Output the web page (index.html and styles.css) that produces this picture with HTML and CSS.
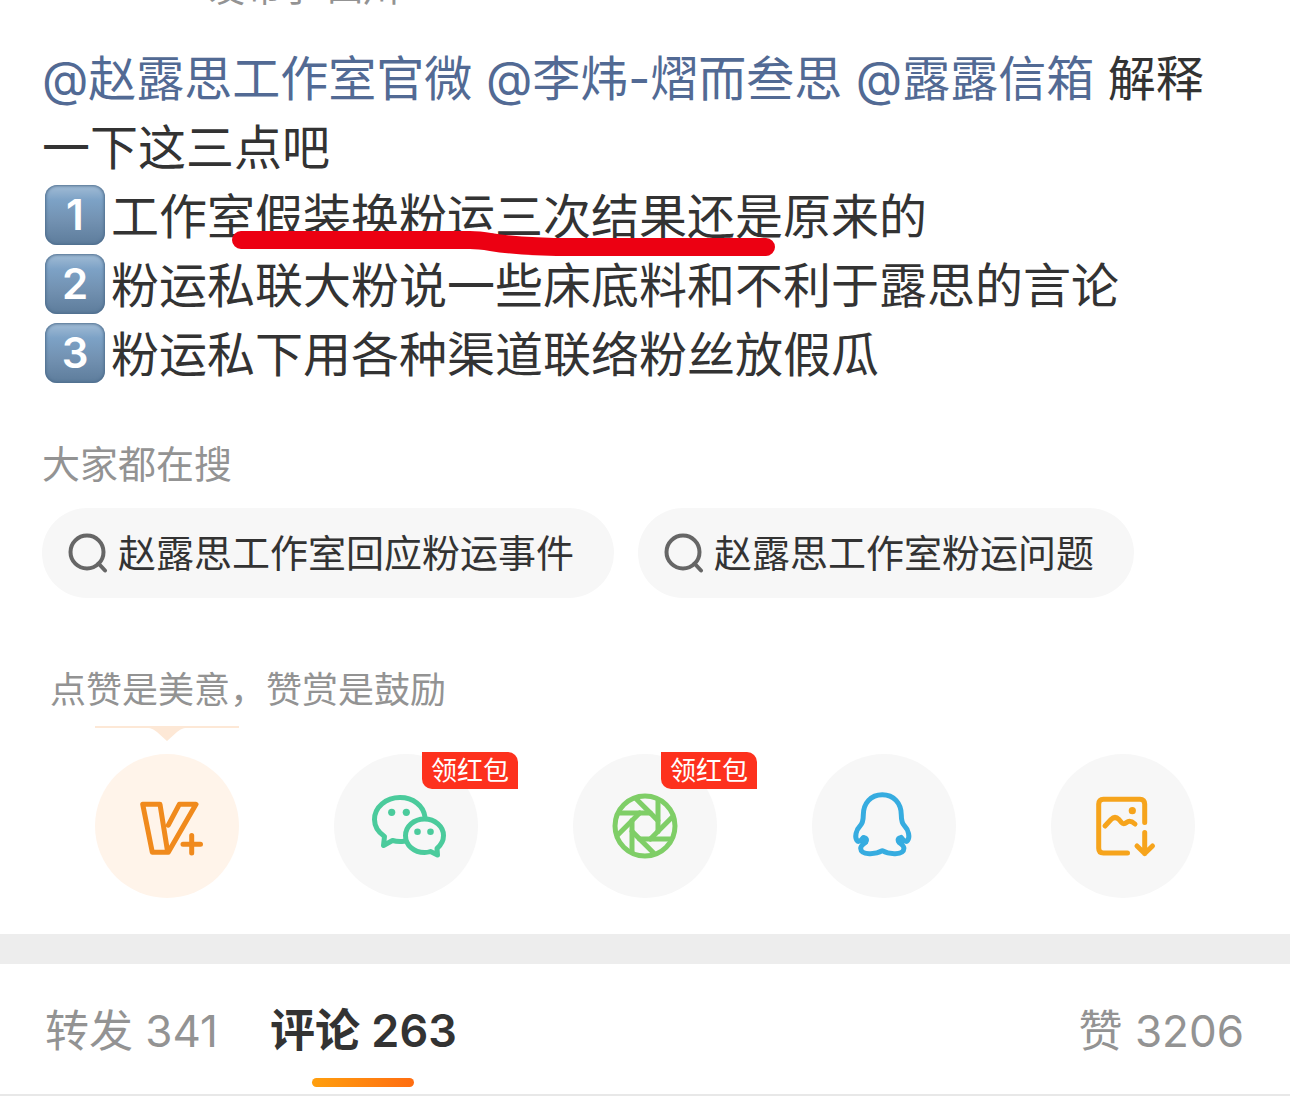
FILE: index.html
```html
<!DOCTYPE html>
<html lang="zh-CN">

<head>
    <meta charset="UTF-8">
    <meta name="viewport" content="width=device-width, initial-scale=1.0">
    <title>微博正文</title>
    <link rel="stylesheet" href="styles.css">
</head>

<body>
    <header class="post-header">
        <span class="post-meta">发布于 四川</span>
    </header>

    <!-- 正文 -->
    <article class="post">
        <p class="post-text"><a href="#">@赵露思工作室官微</a> <a href="#">@李炜-熠而叁思</a> <a href="#">@露露信箱</a> 解释一下这三点吧</p>
        <ol class="points">
            <li>
                <span class="keycap">1</span>工作室假装换粉运三次结果还是原来的
                <svg class="marker" width="544" height="28" viewBox="0 0 544 28" aria-hidden="true">
                    <path d="M9 10H238C262 10 262 17 340 17H534" />
                </svg>
            </li>
            <li><span class="keycap">2</span>粉运私联大粉说一些床底料和不利于露思的言论</li>
            <li><span class="keycap">3</span>粉运私下用各种渠道联络粉丝放假瓜</li>
        </ol>
    </article>

    <!-- 大家都在搜 -->
    <section class="search">
        <h2>大家都在搜</h2>
        <div class="chips">
            <a class="chip" href="#">
                <svg width="40" height="40" viewBox="0 0 40 40" aria-hidden="true">
                    <circle cx="19" cy="19" r="16.5" />
                    <path d="M30.5 30.5l6.5 7" />
                </svg>
                <span>赵露思工作室回应粉运事件</span>
            </a>
            <a class="chip" href="#">
                <svg width="40" height="40" viewBox="0 0 40 40" aria-hidden="true">
                    <circle cx="19" cy="19" r="16.5" />
                    <path d="M30.5 30.5l6.5 7" />
                </svg>
                <span>赵露思工作室粉运问题</span>
            </a>
        </div>
    </section>

    <!-- 赞赏和分享 -->
    <section class="share">
        <p class="share-tip">点赞是美意，赞赏是鼓励</p>
        <div class="share-list">
            <div class="share-item">
                <svg class="pointer" width="144" height="15" viewBox="0 0 144 15" aria-hidden="true">
                    <path d="M0 0H144V2H92C87 2 85 4 82 6L72 15L62 6C59 4 57 2 52 2H0Z" />
                </svg>
                <button class="share-btn vplus" type="button" aria-label="V+">
                    <svg width="80" height="80" viewBox="-4 -4 80 80">
                        <path d="M36.5 61L29 14.3H11.7L21.3 62.3H37.3L65 14.3H48.3L37.3 35.2" />
                        <path d="M60.7 45.5V63M52 54.3H69.5" />
                    </svg>
                </button>
            </div>
            <div class="share-item">
                <button class="share-btn wechat" type="button" aria-label="微信">
                    <svg width="80" height="80" viewBox="-4 -4 80 80">
                        <path d="M34 51.3C30 51.7 26 51.5 22.5 50.5L13.5 55.5L14.5 46.5C8 42 4.5 36 4.5 29.5C4.5 17 16 7.5 30 7.5C43 7.5 53.5 15.5 55 27" />
                        <path d="M54.5 29C65 29 73.5 36.5 73.5 45.5C73.5 50.5 71 55 67 58.5L67.5 65L60.5 61.5C58.5 62.2 56.5 62.5 54.5 62.5C43.8 62.5 35.5 55 35.5 45.7C35.5 36.5 43.8 29 54.5 29Z" />
                        <g class="fill">
                            <circle cx="21.7" cy="22.3" r="3.6" />
                            <circle cx="36.3" cy="22.3" r="3.6" />
                            <circle cx="47.5" cy="41.7" r="3.3" />
                            <circle cx="60.5" cy="41.7" r="3.3" />
                        </g>
                    </svg>
                </button>
                <span class="badge">领红包</span>
            </div>
            <div class="share-item">
                <button class="share-btn moments" type="button" aria-label="朋友圈">
                    <svg width="80" height="80" viewBox="-40 -40 80 80">
                        <circle r="30" />
                        <path d="M-26 -13H5.4" />
                        <path d="M-26 -13H5.4" transform="rotate(45)" />
                        <path d="M-26 -13H5.4" transform="rotate(90)" />
                        <path d="M-26 -13H5.4" transform="rotate(135)" />
                        <path d="M-26 -13H5.4" transform="rotate(180)" />
                        <path d="M-26 -13H5.4" transform="rotate(225)" />
                        <path d="M-26 -13H5.4" transform="rotate(270)" />
                        <path d="M-26 -13H5.4" transform="rotate(315)" />
                    </svg>
                </button>
                <span class="badge">领红包</span>
            </div>
            <div class="share-item">
                <button class="share-btn qq" type="button" aria-label="QQ">
                    <svg width="80" height="80" viewBox="-4 -4 80 80">
                        <path d="M34.3 60.7C28 64.5 13 65.5 12.7 58.5C12.6 56 14.5 54.5 17.5 52.5C16 51 15.5 49 15.5 47.5C13.5 50.5 10.5 52.5 9 50.5C6.5 47 8 40 12 36C15 33 15.3 30 15.3 25C15.3 13 23 4.7 34.3 4.7C45.6 4.7 53.3 13 53.3 25C53.3 30 53.6 33 56.6 36C60.6 40 62.1 47 59.6 50.5C58.1 52.5 55.1 50.5 53.1 47.5C53.1 49 52.6 51 51.1 52.5C54.1 54.5 56 56 55.9 58.5C55.6 65.5 40.6 64.5 34.3 60.7Z" />
                        <g class="fill">
                            <circle cx="16.5" cy="50" r="4.5" />
                            <circle cx="52.1" cy="50" r="4.5" />
                        </g>
                    </svg>
                </button>
            </div>
            <div class="share-item">
                <button class="share-btn save" type="button" aria-label="保存图片">
                    <svg width="80" height="80" viewBox="-4 -4 80 80">
                        <path d="M57.7 32.5V14Q57.7 9.3 53 9.3H16.4Q11.7 9.3 11.7 14V58.3Q11.7 63 16.4 63H40.5" />
                        <path d="M18 36L24 29.5Q28 25.5 32 29.5L34.5 32.5Q36.5 35 39.5 32.5Q43 29.5 48 34" />
                        <path d="M57.7 42.5V63.5M50 56L57.7 63.5L65.5 56" />
                        <circle class="fill" cx="45.3" cy="20.7" r="3.6" />
                    </svg>
                </button>
            </div>
        </div>
    </section>

    <!-- 转发 / 评论 / 赞 -->
    <nav class="tabs">
        <button class="tab" type="button">转发 341</button>
        <button class="tab active" type="button">评论 263</button>
        <button class="tab like" type="button">赞 3206</button>
    </nav>
</body>

</html>
```

FILE: styles.css
```css
* {
    box-sizing: border-box;
}

body {
    margin: 0;
    background-color: #fff;
    color: #333;
    font-family: Inter, "Noto Sans CJK SC", sans-serif;
}

a {
    color: #526a94;
    text-decoration: none;
}

button {
    padding: 0;
    border: none;
    background: none;
    font-family: inherit;
    cursor: pointer;
}

h2,
p,
ol {
    margin: 0;
    padding: 0;
}

.post-header {
    height: 44px;
    padding-left: 209px;
    overflow: hidden;
}

.post-meta {
    display: block;
    margin-top: -33px;
    color: #939393;
    font-size: 36px;
    line-height: 44px;
}

/* 正文 */
.post {
    padding: 0 44px 0 42px;
    font-size: 48px;
    line-height: 69px;
}

.points {
    list-style: none;
}

.points li {
    position: relative;
    display: flex;
    align-items: center;
    padding-left: 3px;
}

.keycap {
    flex: none;
    width: 60px;
    height: 60px;
    margin-right: 6px;
    margin-bottom: 4px;
    border-radius: 12px;
    background: linear-gradient(#a3bdd6, #7da2c6 25%, #7291b1 60%, #5d7c9b);
    box-shadow: inset 0 0 3px 1px #4c6c8c;
    color: #fff;
    font-size: 42px;
    font-weight: 600;
    line-height: 60px;
    text-align: center;
}

.marker {
    position: absolute;
    top: 48px;
    left: 190px;
    fill: none;
    stroke: #ec0012;
    stroke-width: 18;
    stroke-linecap: round;
}

/* 大家都在搜 */
.search {
    padding: 49px 42px 0;
}

.search h2 {
    color: #939393;
    font-size: 38px;
    font-weight: 400;
    line-height: 52px;
}

.chips {
    display: flex;
    flex-wrap: wrap;
    gap: 24px;
    margin-top: 18px;
}

.chip {
    display: flex;
    align-items: center;
    gap: 10px;
    height: 90px;
    padding: 0 40px 0 26px;
    border-radius: 45px;
    background-color: #f7f7f7;
    color: #333;
    font-size: 38px;
    line-height: 52px;
}

.chip svg {
    flex: none;
    fill: none;
    stroke: #666;
    stroke-width: 4;
    stroke-linecap: round;
}

/* 赞赏和分享 */
.share {
    padding-top: 67px;
    padding-bottom: 36px;
}

.share-tip {
    padding-left: 50px;
    color: #939393;
    font-size: 36px;
    line-height: 50px;
}

.share-list {
    display: flex;
    justify-content: space-between;
    padding: 39px 95px 0;
}

.share-item {
    position: relative;
}

.pointer {
    position: absolute;
    top: -28px;
    left: 0;
    fill: #fde8d6;
}

.share-btn {
    display: flex;
    align-items: center;
    justify-content: center;
    width: 144px;
    height: 144px;
    border-radius: 50%;
    background-color: #f7f7f7;
}

.share-btn svg {
    fill: none;
    stroke: currentColor;
    stroke-width: 5;
    stroke-linecap: round;
    stroke-linejoin: round;
}

.share-btn .fill {
    fill: currentColor;
    stroke: none;
}

.share-btn.vplus {
    background-color: #fff4ea;
    color: #f08a1d;
}

.wechat {
    color: #4bcb9c;
}

.moments {
    color: #7fce67;
}

.qq {
    color: #36ace0;
}

.save {
    color: #f6a41c;
}

.badge {
    position: absolute;
    top: -2px;
    left: 88px;
    width: 96px;
    border-radius: 0 10px 0 10px;
    background-color: #fd311d;
    color: #fff;
    font-size: 26px;
    line-height: 37px;
    text-align: center;
}

/* 底部标签栏 */
.tabs {
    display: flex;
    gap: 52px;
    padding: 40px 46px 7px 45px;
    border-top: 30px solid #ededed;
    border-bottom: 2px solid #e8e8e8;
}

.tab {
    display: flex;
    flex-direction: column;
    align-items: center;
    color: #939393;
    font-size: 44px;
    line-height: 54px;
}

.tab::after {
    content: "";
    width: 102px;
    height: 9px;
    margin-top: 20px;
    border-radius: 5px;
}

.tab.active {
    color: #333;
    font-size: 45px;
    font-weight: 600;
}

.tab.active::after {
    background: linear-gradient(90deg, #ff9f0e, #ff6d11);
}

.tab.like {
    margin-left: auto;
}
```
